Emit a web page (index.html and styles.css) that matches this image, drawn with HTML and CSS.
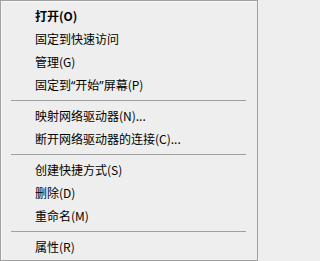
FILE: index.html
```html
<!DOCTYPE html>
<html lang="zh-CN">
<head>
<meta charset="utf-8">
<link rel="stylesheet" href="styles.css">
</head>
<body>
<div class="menu">
  <div class="item bold">打开(O)</div>
  <div class="item">固定到快速访问</div>
  <div class="item">管理(G)</div>
  <div class="item">固定到<span class="q">“</span>开始<span class="q">”</span>屏幕(P)</div>
  <div class="sep"></div>
  <div class="item">映射网络驱动器(N)...</div>
  <div class="item">断开网络驱动器的连接(C)...</div>
  <div class="sep"></div>
  <div class="item">创建快捷方式(S)</div>
  <div class="item">删除(D)</div>
  <div class="item">重命名(M)</div>
  <div class="sep"></div>
  <div class="item">属性(R)</div>
</div>
</body>
</html>
```
FILE: styles.css
```css
html, body {
  margin: 0;
  padding: 0;
  background: #eeeeee;
}
.menu {
  width: 258px;
  height: 261px;
  box-sizing: border-box;
  border: 1px solid #a0a0a0;
  box-shadow: inset 1px 1px 0 #f8f8f8;
  background: #eeeeee;
  padding: 3px 0 2px 0;
  font-family: "Noto Sans CJK SC", "Noto Sans", sans-serif;
  font-size: 12px;
  color: #000;
}
.item {
  height: 23px;
  line-height: 23px;
  padding-left: 34px;
  white-space: nowrap;
}
.q {
  font-family: "Noto Sans", "Liberation Sans", sans-serif;
}
.bold {
  font-weight: bold;
}
.sep {
  height: 8px;
  display: flex;
  flex-direction: column;
  justify-content: center;
  padding: 0 11px 0 10px;
}
.sep::before {
  content: "";
  display: block;
  height: 1px;
  background: #a0a0a0;
}
```
